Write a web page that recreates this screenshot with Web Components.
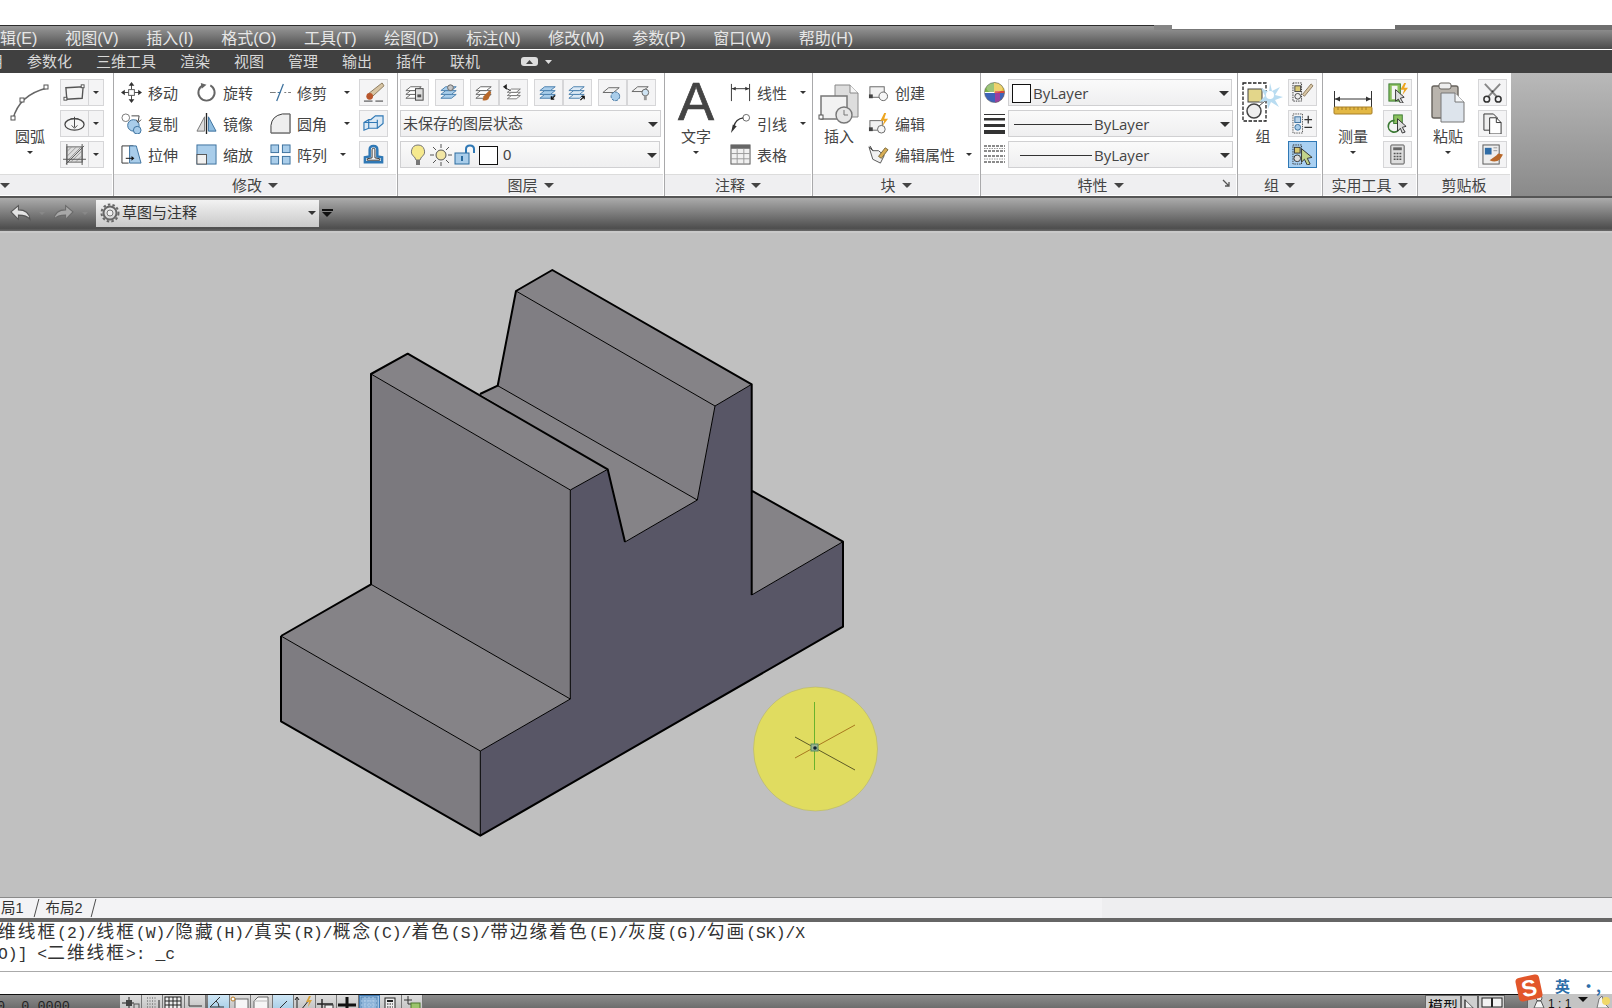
<!DOCTYPE html>
<html lang="zh">
<head>
<meta charset="utf-8">
<title>AutoCAD</title>
<style>
  html, body { margin: 0; height: 100%; overflow: hidden; background: #fff; }
  body { font: 15px "Liberation Sans", "Noto Sans CJK SC", sans-serif; color: #444; }
</style>
</head>
<body>
<cad-app>
  <cad-menubar>
    <span>辑(E)</span><span>视图(V)</span><span>插入(I)</span><span>格式(O)</span><span>工具(T)</span><span>绘图(D)</span><span>标注(N)</span><span>修改(M)</span><span>参数(P)</span><span>窗口(W)</span><span>帮助(H)</span>
  </cad-menubar>
  <cad-tabs>
    <span>参数化</span><span>三维工具</span><span>渲染</span><span>视图</span><span>管理</span><span>输出</span><span>插件</span><span>联机</span>
    <cad-icon name="tabtoggle" w="33" h="12" style="margin-left:16px"></cad-icon>
  </cad-tabs>

  <cad-ribbon>
    <cad-panel style="--w:114px;--pad:6px" left>
      <cad-big label="圆弧" caret><cad-icon name="arc" w="40" h="40"></cad-icon></cad-big>
      <cad-stack style="margin-left:6px">
        <cad-tool icon="rect" drop></cad-tool>
        <cad-tool icon="ellipse" drop></cad-tool>
        <cad-tool icon="hatch" drop></cad-tool>
      </cad-stack>
    </cad-panel>

    <cad-panel label="修改" style="--w:284px;--pad:7px">
      <cad-stack style="--col:75px">
        <cad-item icon="move" label="移动"></cad-item>
        <cad-item icon="copy" label="复制"></cad-item>
        <cad-item icon="stretch" label="拉伸"></cad-item>
      </cad-stack>
      <cad-stack style="--col:74px">
        <cad-item icon="rotate" label="旋转"></cad-item>
        <cad-item icon="mirror" label="镜像"></cad-item>
        <cad-item icon="scale" label="缩放"></cad-item>
      </cad-stack>
      <cad-stack style="--col:80px;margin-right:9px">
        <cad-item icon="trim" label="修剪" caret></cad-item>
        <cad-item icon="fillet" label="圆角" caret></cad-item>
        <cad-item icon="array" label="阵列" caret style="padding-right:4px"></cad-item>
      </cad-stack>
      <cad-stack>
        <cad-tool icon="erase"></cad-tool>
        <cad-tool icon="explode"></cad-tool>
        <cad-tool icon="offset"></cad-tool>
      </cad-stack>
    </cad-panel>

    <cad-panel label="图层" column style="--w:267px;--pad:2px">
      <cad-row>
        <cad-tool icon="lay1"></cad-tool>
        <cad-tool icon="lay2" style="margin-left:6px"></cad-tool>
        <cad-tool icon="lay3" style="margin-left:6px"></cad-tool><cad-tool icon="lay4"></cad-tool>
        <cad-tool icon="lay5" style="margin-left:6px"></cad-tool><cad-tool icon="lay6"></cad-tool>
        <cad-tool icon="lay7" style="margin-left:6px"></cad-tool><cad-tool icon="lay8"></cad-tool>
      </cad-row>
      <cad-combo style="--cw:261px"><span>未保存的图层状态</span></cad-combo>
      <cad-combo style="--cw:260px">
        <cad-icon name="bulb" w="20" h="22" style="margin-left:5px"></cad-icon>
        <cad-icon name="sun" w="22" h="22" style="margin-left:2px"></cad-icon>
        <cad-icon name="lock" w="22" h="22" style="margin-left:2px"></cad-icon>
        <cad-swatch style="margin-left:3px"></cad-swatch>
        <span style="margin-left:5px">0</span>
      </cad-combo>
    </cad-panel>

    <cad-panel label="注释" style="--w:148px;--pad:7px">
      <cad-big label="文字" caret><span style="font:400 54px/44px 'Liberation Sans',sans-serif;color:#444;-webkit-text-stroke:.7px #444;margin-bottom:3px">A</span></cad-big>
      <cad-stack style="--col:76px;margin-left:10px">
        <cad-item icon="dim" label="线性" caret></cad-item>
        <cad-item icon="leader" label="引线" caret></cad-item>
        <cad-item icon="table" label="表格"></cad-item>
      </cad-stack>
    </cad-panel>

    <cad-panel label="块" style="--w:168px;--pad:2px">
      <cad-big label="插入"><cad-icon name="insert" w="42" h="42"></cad-icon></cad-big>
      <cad-stack style="--col:104px;margin-left:5px">
        <cad-item icon="bcreate" label="创建"></cad-item>
        <cad-item icon="bedit" label="编辑"></cad-item>
        <cad-item icon="battr" label="编辑属性" caret></cad-item>
      </cad-stack>
    </cad-panel>

    <cad-panel label="特性" launcher column style="--w:257px;--pad:3px">
      <cad-row>
        <cad-icon name="wheel" w="21" h="21" style="margin-right:3px"></cad-icon>
        <cad-combo style="--cw:224px"><cad-swatch style="margin-left:1px"></cad-swatch><span style="margin-left:2px;font-family:'Open Sans',sans-serif">ByLayer</span></cad-combo>
      </cad-row>
      <cad-row>
        <cad-icon name="lweight" w="21" h="21" style="margin-right:3px"></cad-icon>
        <cad-combo style="--cw:225px"><i style="display:block;width:78px;height:1px;background:#333;margin-left:3px"></i><span style="margin-left:2px;font-family:'Open Sans',sans-serif">ByLayer</span></cad-combo>
      </cad-row>
      <cad-row>
        <cad-icon name="ltype" w="21" h="21" style="margin-right:3px"></cad-icon>
        <cad-combo style="--cw:225px"><i style="display:block;width:72px;height:1px;background:#333;margin-left:9px"></i><span style="margin-left:2px;font-family:'Open Sans',sans-serif">ByLayer</span></cad-combo>
      </cad-row>
    </cad-panel>

    <cad-panel label="组" style="--w:85px;--pad:1px">
      <cad-big label="组"><cad-icon name="group" w="42" h="42"></cad-icon></cad-big>
      <cad-stack style="margin-left:1px">
        <cad-tool icon="gedit"></cad-tool>
        <cad-tool icon="gplus"></cad-tool>
        <cad-tool icon="gsel" active></cad-tool>
      </cad-stack>
    </cad-panel>

    <cad-panel label="实用工具" style="--w:95px;--pad:6px">
      <cad-big label="测量" caret><cad-icon name="measure" w="40" h="26"></cad-icon></cad-big>
      <cad-stack style="margin-left:6px">
        <cad-tool icon="quick"></cad-tool>
        <cad-tool icon="idsel"></cad-tool>
        <cad-tool icon="calc"></cad-tool>
      </cad-stack>
    </cad-panel>

    <cad-panel label="剪贴板" nocaret style="--w:93px;--pad:6px;border-right:0">
      <cad-big label="粘贴" caret><cad-icon name="paste" w="36" h="42"></cad-icon></cad-big>
      <cad-stack style="margin-left:6px">
        <cad-tool icon="cut"></cad-tool>
        <cad-tool icon="copyclip"></cad-tool>
        <cad-tool icon="match"></cad-tool>
      </cad-stack>
    </cad-panel>
    <cad-ribbon-end></cad-ribbon-end>
  </cad-ribbon>

  <cad-qat label="草图与注释"></cad-qat>
  <cad-viewport></cad-viewport>
  <cad-layouts></cad-layouts>
  <cad-command>
    <cad-cmdline text="维线框(2)/线框(W)/隐藏(H)/真实(R)/概念(C)/着色(S)/带边缘着色(E)/灰度(G)/勾画(SK)/X"></cad-cmdline>
    <cad-cmdline text="O)] <二维线框>: _c"></cad-cmdline>
  </cad-command>
  <cad-status></cad-status>
  <cad-ime></cad-ime>
</cad-app>

<script>
const stack = (s = '#666', f = '#fff') => `<g fill="${f}" stroke="${s}"><path d="M3 16l5-4h11l-5 4z"/><path d="M3 12l5-4h11l-5 4z"/><path d="M3 8l5-4h11l-5 4z"/></g>`;
const sq = (x, y, s = 3) => `<rect x="${x}" y="${y}" width="${s}" height="${s}" fill="#fff" stroke="#555"/>`;

// every icon: [viewBox, svg markup]
const ICONS = {
  tabtoggle: ['0 0 33 12', '<rect x="1" y="1" width="17" height="9" rx="3" fill="#ddd"/><path d="M6 8l3.500-4 3.500 4z" fill="#444"/><path d="M25 4h7l-3.500 4z" fill="#ddd"/>'],
  arc: ['0 0 40 40', '<path d="M3 36Q9 12 37 5" fill="none" stroke="#666" stroke-width="1.500"/>' + sq(1, 33, 4) + sq(10, 15, 4) + sq(34, 2, 4)],
  rect: ['0 0 24 20', '<path d="M3 5l18-1-1 12-16 1z" fill="#f4f4f4" stroke="#555" stroke-width="1.400"/>' + sq(1, 15) + sq(19, 2)],
  ellipse: ['0 0 24 20', '<ellipse cx="12" cy="11" rx="10" ry="6" fill="#f5f5f5" stroke="#444" stroke-width="1.300"/><path d="M12 3v11M9 12l3 3 3-3M8 5h8" fill="none" stroke="#444"/>'],
  hatch: ['0 0 24 22', '<rect x="4" y="3" width="16" height="16" fill="#ddd" stroke="#666"/><path d="M4 8l5-5M4 13l10-10M4 18L19 3M8 19L20 7M13 19l7-7" stroke="#999"/><path d="M0 16h24M4 0v22M20 0v22M3 21L22 2" stroke="#555"/>'],
  move: ['0 0 22 22', '<path d="M11 2v18M2 11h18" stroke="#444"/><path d="M11 0l3 4H8zM11 22l3-4H8zM0 11l4-3v6zM22 11l-4-3v6z" fill="#333"/>' + sq(8, 8, 6)],
  copy: ['0 0 22 22', '<circle cx="5" cy="5" r="4" fill="#fff" stroke="#777"/><circle cx="13" cy="13" r="6" fill="#a9cdea" stroke="#3a6f9c"/><circle cx="17" cy="18" r="4" fill="#a9cdea" stroke="#3a6f9c"/><path d="M11 3h8l-1 6M16 7l2 3 3-3" fill="none" stroke="#444"/>'],
  stretch: ['0 0 22 22', '<path d="M1 2h12M1 2v18h7" fill="none" stroke="#333"/><path d="M9 2h7l5 18H9z" fill="#a9cdea" stroke="#3a6f9c"/><path d="M5 15h7" stroke="#111"/><path d="M14 15l-3-2.500v5z" fill="#111"/>'],
  rotate: ['0 0 22 22', '<path d="M15 3.500A8.500 8.500 0 1 1 7 3.500" fill="none" stroke="#666" stroke-width="2"/><path d="M5 1l6 2-5 4z" fill="#666"/>'],
  mirror: ['0 0 22 22', '<path d="M1 19L9 4v15z" fill="#ddd" stroke="#777"/><path d="M13 4l8 15h-8z" fill="#8fbde0" stroke="#3a6f9c"/><path d="M11 0v22" stroke="#222" stroke-width="1.400"/>'],
  scale: ['0 0 22 22', '<rect x="1" y="1" width="20" height="20" fill="#a9cdea" stroke="#3a6f9c"/><rect x="1" y="11" width="10" height="10" fill="#f1f1f1" stroke="#555"/>'],
  trim: ['0 0 22 22', '<path d="M0 11h6M15 11h2M19 11h3" stroke="#777"/><path d="M8 11h3" stroke="#3a6f9c"/><path d="M7 20L14 2" stroke="#3a6f9c" stroke-width="1.300"/>'],
  fillet: ['0 0 22 22', '<path d="M1 21V13Q2 3 13 1h8v20z" fill="#eee" stroke="#333"/><path d="M1 21h20M21 1v20" stroke="#888" fill="none"/>'],
  array: ['0 0 22 22', '<g fill="#a9cdea" stroke="#3a6f9c"><rect x="1" y="1" width="8" height="8"/><rect x="13" y="1" width="8" height="8"/><rect x="1" y="13" width="8" height="8"/><rect x="13" y="13" width="8" height="8"/></g>'],
  erase: ['0 0 24 22', '<path d="M7 12L21 1l2 3L10 16z" fill="#d8c5a4" stroke="#8b7a5c"/><circle cx="8" cy="15" r="3.500" fill="#b9562c"/><path d="M2 20h9M14 20h8" stroke="#333"/>'],
  explode: ['0 0 24 22', '<g fill="#dbe9f5" stroke="#2f78b5" stroke-width="1.200"><path d="M2 10l5-3h9v9H7l-5 2z"/><path d="M9 7l5-4h8v8l-6 5"/><path d="M7 7v9M16 7v9M2 10h14"/></g>'],
  offset: ['0 0 24 22', '<path d="M3 19v-5l5-1V6q0-4 4-4t4 4v7l5 1v5z" fill="none" stroke="#2f78b5" stroke-width="2.600"/><path d="M5.500 17v-1.500l5-1V6q0-1.500 1.500-1.500T13.500 6v8.500l5 1V17z" fill="none" stroke="#333"/>'],
  lay1: ['0 0 24 20', stack() + '<rect x="13" y="6" width="8" height="12" fill="#ddd" stroke="#444"/><rect x="15" y="12" width="4" height="3" fill="#555"/>'],
  lay2: ['0 0 24 20', stack('#4a80ad', '#a9cdea') + '<circle cx="13" cy="5" r="3" fill="#c4c4c4" stroke="#666"/>'],
  lay3: ['0 0 24 20', stack() + '<path d="M11 14l6-6 2 2-3 7q-3 2-6 1z" fill="#b8682a"/>'],
  lay4: ['0 0 24 20', '<g transform="translate(3 3) scale(.85)">' + stack() + '</g><path d="M3 5l6 3" stroke="#333"/><path d="M1 4l4-3v6z" fill="#222"/>'],
  lay5: ['0 0 24 20', stack('#4a80ad', '#a9cdea') + '<path d="M19 13l-4 4M15 14v3h3" fill="none" stroke="#111" stroke-width="1.300"/>'],
  lay6: ['0 0 24 20', stack('#4a80ad', '#dbe9f5') + '<path d="M15 18l4-4M16 14h3v3" fill="none" stroke="#111" stroke-width="1.300"/>'],
  lay7: ['0 0 24 20', '<path d="M2 10l6-5h11l-6 5z" fill="#f1f1f1" stroke="#666"/><circle cx="15" cy="14" r="4.500" fill="#a9cdea" stroke="#3a6f9c" stroke-dasharray="3 1"/>'],
  lay8: ['0 0 24 20', '<path d="M2 9l6-5h11l-6 5z" fill="#f1f1f1" stroke="#666"/><circle cx="16" cy="10" r="3.500" fill="#cfe4f4" stroke="#666"/><rect x="14.500" y="13" width="3" height="5" fill="#999"/>'],
  bulb: ['0 0 20 22', '<path d="M10 1a6.500 6.500 0 0 0-3.500 12L8 16h4l1.500-3A6.500 6.500 0 0 0 10 1z" fill="#f6e98d" stroke="#777"/><rect x="8" y="16" width="4" height="5" fill="#777"/>'],
  sun: ['0 0 22 22', '<circle cx="11" cy="11" r="5" fill="#f2e6a4" stroke="#555"/><path d="M11 0v4M11 18v4M0 11h4M18 11h4M3 3l3 3M16 16l3 3M3 19l3-3M16 6l3-3" stroke="#555"/>'],
  lock: ['0 0 22 22', '<path d="M12 9V5q0-3.500 4-3.500T20 5v4" fill="none" stroke="#2f78b5" stroke-width="2"/><rect x="1" y="9" width="14" height="11" fill="#a9cdea" stroke="#2c6c9f"/><rect x="7" y="12" width="2" height="5" fill="#2c6c9f"/>'],
  dim: ['0 0 22 22', '<path d="M1.500 2v18M20.500 2v18M2 7h18" stroke="#333" fill="none"/><path d="M2 7l4-2v4zM20 7l-4-2v4z" fill="#333"/>'],
  leader: ['0 0 22 22', '<circle cx="17" cy="5" r="3.500" fill="#fff" stroke="#666"/><path d="M14 5Q6 6 4 14" fill="none" stroke="#333" stroke-width="1.300"/><path d="M1 21l2-9 4 2z" fill="#333"/>'],
  table: ['0 0 22 22', '<rect x="1" y="1" width="20" height="20" fill="#f0f0f0" stroke="#555"/><rect x="1" y="1" width="20" height="4" fill="#666"/><path d="M1 10h20M1 15.500h20M7.500 5v16M14.500 5v16" stroke="#999"/>'],
  insert: ['0 0 42 42', '<path d="M17 3h15l8 8v24H17z" fill="#ddd" stroke="#888"/><path d="M32 3v8h8" fill="#f6f6f6" stroke="#888"/><rect x="3" y="14" width="26" height="23" fill="#f2f2f2" stroke="#777" stroke-width="1.500"/>' + sq(1, 33, 4) + '<circle cx="26" cy="33" r="8" fill="#e6e6e6" stroke="#777" stroke-width="1.400"/><path d="M26 33v-5M26 33h4" stroke="#777"/>'],
  bcreate: ['0 0 22 22', '<rect x="2" y="5" width="15" height="11" fill="#f2f2f2" stroke="#666"/><rect x="1" y="13" width="4" height="4" fill="#444"/><circle cx="16" cy="15" r="4.500" fill="#f6f6f6" stroke="#666"/>'],
  bedit: ['0 0 22 22', '<rect x="2" y="8" width="13" height="10" fill="#f2f2f2" stroke="#666"/><rect x="1" y="15" width="4" height="4" fill="#444"/><circle cx="14" cy="17" r="4" fill="#f6f6f6" stroke="#666"/><path d="M17 0l-4 8h4l-2 6 6-8h-4l2-6z" fill="#eda520"/>'],
  battr: ['0 0 22 22', '<path d="M1 3l4 4h6l6 5-4 8-8-4z" fill="#f1f1f1" stroke="#555"/><path d="M2 2l3 5" stroke="#333"/><path d="M11 13l7-9 3 2-7 9z" fill="#d8ad55" stroke="#7b6a3c"/>'],
  wheel: ['0 0 21 21', '<defs><clipPath id="c"><circle cx="10.500" cy="10.500" r="10"/></clipPath></defs><g clip-path="url(#c)"><path d="M0 0h21v10H0z" fill="#7bb24b"/><path d="M10 0h11v11H10z" fill="#e9c33c"/><path d="M11 9h10v12H11z" fill="#d8453a"/><path d="M0 11h21v10H0z" fill="#3d63b8"/><path d="M11 11h5v10h-5z" fill="#9a3fa0"/><ellipse cx="10.500" cy="6" rx="8" ry="5" fill="#fff" opacity=".25"/></g><circle cx="10.500" cy="10.500" r="10" fill="none" stroke="#666" stroke-width=".6"/>'],
  lweight: ['0 0 21 21', '<rect y="1" width="21" height="1" fill="#333"/><rect y="5" width="21" height="2.500" fill="#333"/><rect y="11" width="21" height="3" fill="#333"/><rect y="17" width="21" height="4.500" fill="#333"/>'],
  ltype: ['0 0 21 21', '<path d="M0 2h21M0 7h21M0 12h21M0 18h21" stroke="#666" stroke-width="1.300" stroke-dasharray="3 1"/><path d="M0 4.500h21M0 15h21" stroke="#999" stroke-dasharray="1.500 1"/>'],
  group: ['0 0 42 42', '<rect x="1" y="1" width="23" height="38" fill="none" stroke="#222" stroke-width="1.300" stroke-dasharray="3.500 1.500"/><rect x="6" y="7" width="14" height="13" fill="#e3d68a" stroke="#444"/><circle cx="12" cy="29" r="7" fill="#eee" stroke="#444" stroke-width="1.500"/><path d="M17 24l6-5" stroke="#444"/><path d="M28 1l2 8 8-4-5 8 8 2-8 3 4 7-8-5-3 7-1-8-8 1 6-6-4-8 8 4z" fill="#b9dcf1"/><circle cx="28" cy="13" r="4" fill="#fff"/>'],
  gedit: ['0 0 24 22', '<rect x="2" y="1" width="9" height="19" fill="none" stroke="#333" stroke-dasharray="1.500 1"/><rect x="4" y="4" width="6" height="6" fill="#d8c872" stroke="#444"/><circle cx="7" cy="15" r="3" fill="#eee" stroke="#444"/><path d="M12 13l9-11 2 2-9 11z" fill="#d8c5a4" stroke="#8b7a5c"/>'],
  gplus: ['0 0 24 22', '<rect x="2" y="1" width="10" height="20" fill="none" stroke="#555" stroke-dasharray="1.500 1"/><rect x="4" y="4" width="6" height="6" fill="#bcd5ea" stroke="#3a6f9c"/><circle cx="7" cy="15" r="3" fill="#a9cdea" stroke="#3a6f9c"/><path d="M14 7h8M18 3v8M14 15h8" stroke="#333" stroke-width="1.300"/>'],
  gsel: ['0 0 24 22', '<rect x="2" y="1" width="9" height="20" fill="none" stroke="#333" stroke-dasharray="1.500 1"/><rect x="3.500" y="3.500" width="6" height="6" fill="#d8c872" stroke="#333"/><circle cx="6.500" cy="15" r="3.500" fill="#ddd" stroke="#333"/><path d="M11 5l11 9-5 1 3 6-3 1-3-6-3 3z" fill="#c2d38b" stroke="#333"/>'],
  measure: ['0 0 40 26', '<path d="M1.500 1v16M38.500 1v16M2 9h36" stroke="#333" fill="none"/><path d="M2 9l5-2.500v5zM38 9l-5-2.500v5z" fill="#333"/><rect x="1" y="17" width="38" height="7" rx="1" fill="#e3b844" stroke="#a77f26"/><path d="M5 17v3M9 17v3M13 17v3M17 17v3M21 17v3M25 17v3M29 17v3M33 17v3" stroke="#a77f26"/>'],
  quick: ['0 0 24 22', '<rect x="3" y="2" width="12" height="18" fill="#8cc05f" stroke="#3b7a33"/><rect x="6" y="4" width="6" height="14" fill="#f5f5f5"/><path d="M19 1l-4 7h4l-2 6 6-8h-4l2-5z" fill="#eda520"/><path d="M10 8l9 8-4 1 3 5-3 0-2-4-3 2z" fill="#ddd" stroke="#333"/>'],
  idsel: ['0 0 24 22', '<rect x="8" y="2" width="9" height="9" fill="#8cc05f" stroke="#3b7a33"/><path d="M9 8a6 6 0 1 0 5 8" fill="none" stroke="#3b7a33" stroke-width="1.800"/><path d="M12 6l9 8-4 1 3 5-3 1-2-5-3 3z" fill="#ddd" stroke="#333"/>'],
  calc: ['0 0 24 22', '<rect x="5" y="1" width="14" height="20" rx="1" fill="#ddd" stroke="#555"/><rect x="7.500" y="3.500" width="9" height="3" fill="#666"/><path d="M8 10h8M8 13h8M8 16h8" stroke="#555" stroke-width="1.500" stroke-dasharray="2 1"/>'],
  paste: ['0 0 36 42', '<rect x="2" y="4" width="26" height="32" rx="2" fill="#b9b4ad" stroke="#66625c" stroke-width="1.400"/><rect x="9" y="1" width="12" height="6" rx="2" fill="#eee" stroke="#66625c"/><path d="M11 11h14l9 9v20H11z" fill="#dde4ec" stroke="#777"/><path d="M25 11v9h9" fill="#f5f7f9" stroke="#777"/>'],
  cut: ['0 0 24 22', '<path d="M4 2l13 14M20 2L7 16" stroke="#888" stroke-width="2"/><circle cx="6" cy="18" r="3" fill="none" stroke="#333" stroke-width="1.600"/><circle cx="18" cy="18" r="3" fill="none" stroke="#333" stroke-width="1.600"/><circle cx="12" cy="10" r="1" fill="#333"/>'],
  copyclip: ['0 0 24 22', '<path d="M3 1h10l4 4v13H3z" fill="#eee" stroke="#333"/><path d="M9 5h7l5 5v12H9z" fill="#fff" stroke="#333"/><path d="M16 5v5h5" fill="none" stroke="#333"/>'],
  match: ['0 0 24 22', '<rect x="2" y="1" width="17" height="20" fill="#eee" stroke="#555"/><rect x="4" y="4" width="7" height="7" fill="#2f6ca6"/><path d="M13 4h4M13 7h4" stroke="#999"/><path d="M9 17l7-5 2-2 5 1-3 5q-5 4-11 1z" fill="#b8682a"/>'],
  undo: ['0 0 20 16', '<path d="M1 7l7-6v4q10 0 11 9-3-4-11-4v4z" fill="#e4e4e4" stroke="#555"/>'],
  redo: ['0 0 20 16', '<path d="M19 7l-7-6v4Q2 5 1 14q3-4 11-4v4z" fill="#a8a8a8" stroke="#6a6a6a"/>'],
  gear: ['0 0 20 20', '<circle cx="10" cy="10" r="6.500" fill="none" stroke="#666" stroke-width="2"/><circle cx="10" cy="10" r="8.500" fill="none" stroke="#666" stroke-width="2" stroke-dasharray="2.500 2.200"/><circle cx="10" cy="10" r="3" fill="#eee" stroke="#777"/>'],
  slash: ['0 0 8 21', '<path d="M1 20L6 1" stroke="#444" fill="none"/>'],
  launch: ['0 0 9 9', '<path d="M1 1l6 6M7 3v4H3" fill="none" stroke="#555" stroke-width="1.300"/>'],
  snap: ['0 0 20 14', '<path d="M9 1v12M2 7h12" stroke="#222"/><rect x="6" y="4" width="6" height="6" fill="#444"/><rect x="14" y="8" width="5" height="5" fill="none" stroke="#555"/>'],
  dots: ['0 0 20 14', '<path d="M5 2h9M5 5h9M5 8h9M5 11h9" stroke="#555" stroke-dasharray="1 1.500"/><path d="M17 4v8" stroke="#222"/>'],
  grid: ['0 0 20 14', '<rect x="2" y="1" width="16" height="13" fill="#eee" stroke="#222"/><path d="M2 5h16M2 9h16M6 1v13M10 1v13M14 1v13" stroke="#222"/>'],
  ortho: ['0 0 20 14', '<path d="M4 0v10h13" fill="none" stroke="#333"/>'],
  polar: ['0 0 20 14', '<path d="M2 11L12 1M2 11h14" fill="none" stroke="#333"/><path d="M8 5q3 2 3 6" fill="none" stroke="#333"/>'],
  osnap: ['0 0 20 14', '<rect x="5" y="3" width="13" height="11" fill="#f6f6f6" stroke="#666"/><circle cx="3" cy="3" r="2" fill="#fff" stroke="#b5761d"/>'],
  box3d: ['0 0 20 14', '<path d="M3 5l4-4h10v13H3z" fill="#f6f6f6" stroke="#666"/><path d="M3 5h14" stroke="#bbb"/>'],
  track: ['0 0 20 14', '<path d="M5 14l9-9" stroke="#333"/><path d="M6 14h3" stroke="#888"/>'],
  ducs: ['0 0 20 14', '<path d="M3 14V2M1 4l2-3 2 3M7 14l8-10" fill="none" stroke="#222"/><path d="M15 0l-3 6h3l-1 5 4-7h-3l2-4z" fill="#d9a23a"/>'],
  dyn: ['0 0 20 14', '<path d="M6 3v11M1 8h16" stroke="#222" stroke-width="1.400"/><rect x="9" y="9" width="8" height="5" fill="#eee" stroke="#333"/>'],
  lw: ['0 0 20 14', '<path d="M10 1v11M1 9h18" stroke="#111" stroke-width="3"/>'],
  tp: ['0 0 20 14', '<rect x="2" y="1" width="16" height="13" fill="#8db3d8" stroke="#4f80ad"/><path d="M2 5h16M2 9h16M6 1v13M10 1v13M14 1v13" stroke="#b6d0ea" stroke-dasharray="1.500 1.500"/>'],
  qp: ['0 0 20 14', '<rect x="5" y="2" width="10" height="12" fill="#eee" stroke="#222"/><rect x="7" y="4" width="6" height="2" fill="#222"/><path d="M7 8h6M7 11h6" stroke="#222" stroke-dasharray="1.500 1"/>'],
  sc: ['0 0 20 14', '<path d="M6 0v8M2 4h8" stroke="#333"/><path d="M6 8h8" stroke="#333"/><rect x="9" y="7" width="9" height="7" fill="#9bc46a" stroke="#4e7a2e"/>'],
  rtile: ['0 0 20 14', '<path d="M4 2l11 11H4z" fill="#eee" stroke="#333"/><path d="M4 2v11" stroke="#111"/>'],
  rtile2: ['0 0 22 14', '<rect x="1" y="1" width="9.500" height="9" fill="#f2f2f2" stroke="#222"/><rect x="11.500" y="1" width="9.500" height="9" fill="#f2f2f2" stroke="#222"/>'],
  person: ['0 0 14 14', '<circle cx="7" cy="4" r="3" fill="#f4f4f4" stroke="#555"/><path d="M2 14l3-7h4l3 7z" fill="#f4f4f4" stroke="#555"/>'],
  star: ['0 0 16 14', '<path d="M2 14l2-9 3-3 2 7 5 5z" fill="#f4f4f4" stroke="#777"/><circle cx="11" cy="7" r="4" fill="#f0d86a"/>'],
};

// shared base, every element renders its shadow once
class CadElement extends HTMLElement {
  connectedCallback() {
    if (this.shadowRoot) return;
    this.attachShadow({mode: 'open'}).innerHTML = this.render();
  }
}

class CadIcon extends CadElement {
  render() {
    const [vb, body] = ICONS[this.getAttribute('name')];
    const w = this.getAttribute('w') || 22, h = this.getAttribute('h') || 20;
    return `<style>:host{display:inline-flex;flex:none}svg{display:block}</style>
      <svg xmlns="http://www.w3.org/2000/svg" width="${w}" height="${h}" viewBox="${vb}">${body}</svg>`;
  }
}

class CadCaret extends CadElement {
  render() {
    return `<style>:host{display:inline-block;flex:none;width:0;height:0;
      border-top:var(--s,4px) solid var(--c,#333);border-left:var(--s,4px) solid transparent;border-right:var(--s,4px) solid transparent}</style>`;
  }
}

class CadApp extends CadElement {
  render() {
    return `<style>:host{display:flex;flex-direction:column;position:relative;width:1612px;height:1008px;overflow:hidden;background:#fff}
      .top{height:25px;flex:none;background:#fff}</style><div class="top"></div><slot></slot>`;
  }
}

class CadMenubar extends CadElement {
  render() {
    return `<style>
      :host{display:flex;flex:none;position:relative;height:25px;box-sizing:border-box;gap:27.800px;align-items:center;
        border-top:1px solid #2c2c2c;border-bottom:1px solid #fff;padding-top:2px;
        background:linear-gradient(#999,#4b4b4b);font-size:16px;line-height:21px;color:#e6e6e6}
      ::slotted(span){white-space:nowrap}
      .edge{position:absolute;left:0;right:0;top:-1px;height:5px;display:flex}
      .edge i{display:block;height:100%}
      .a{margin-left:1154px;width:18px;background:#858585}
      .b{width:223px;height:4px!important;background:#fff;border-bottom:1px solid #777}
      .c{flex:1;background:#6f6f6f}
    </style><slot></slot><div class="edge"><i class="a"></i><i class="b"></i><i class="c"></i></div>`;
  }
}

class CadTabs extends CadElement {
  render() {
    return `<style>
      :host{display:flex;flex:none;height:23px;gap:24px;align-items:center;background:#404040;
        color:#d8d8d8;font-size:15px;line-height:23px;padding-left:27px;position:relative}
      ::slotted(span){white-space:nowrap}
      .cut{position:absolute;left:-12px;top:0;font-size:15px}
    </style><span class="cut">用</span><slot></slot>`;
  }
}

class CadRibbon extends CadElement {
  render() {
    return `<style>:host{display:flex;flex:none;height:123px;background:#fff}</style><slot></slot>`;
  }
}

class CadRibbonEnd extends CadElement {
  render() {
    return `<style>:host{display:block;flex:1;background:linear-gradient(#b9b9b9,#8a8a8a)}</style>`;
  }
}

class CadPanel extends CadElement {
  render() {
    const label = this.getAttribute('label') || '';
    const dir = this.hasAttribute('column') ? 'column' : 'row';
    const gap = this.hasAttribute('column') ? '4px' : '0';
    const left = this.hasAttribute('left');
    const lnch = this.hasAttribute('launcher');
    const caret = this.hasAttribute('nocaret') ? '' : `<cad-caret style="--s:5px;--c:#444${left ? ';margin-left:-6px' : ''}"></cad-caret>`;
    return `<style>
      :host{display:flex;flex-direction:column;flex:none;width:var(--w);box-sizing:border-box;border-right:1px solid #a9a9ab;position:relative;background:#fff}
      .body{display:flex;flex-direction:${dir};gap:${gap};height:101px;box-sizing:border-box;padding:6px 0 0 var(--pad,0)}
      .title{display:flex;align-items:center;justify-content:${left ? 'flex-start' : 'center'};gap:6px;height:21px;margin-right:1px;padding-top:1px;padding-right:${lnch ? '16px' : '0'};
        background:#efeff1;border-top:1px solid #dcdcdc;box-sizing:border-box;font-size:15px;line-height:18px;color:#444}
      .lnch{position:absolute;right:6px;top:106px}
    </style>
    <div class="body"><slot></slot></div>
    <div class="title"><span>${label}</span>${caret}</div>
    ${lnch ? '<cad-icon class="lnch" name="launch" w="9" h="9"></cad-icon>' : ''}`;
  }
}

class CadStack extends CadElement {
  render() {
    return `<style>:host{display:grid;grid-auto-rows:27px;row-gap:4px;flex:none;width:var(--col,auto)}</style><slot></slot>`;
  }
}

class CadRow extends CadElement {
  render() {
    return `<style>:host{display:flex;align-items:center;height:27px;flex:none}</style><slot></slot>`;
  }
}

class CadItem extends CadElement {
  render() {
    return `<style>
      :host{display:flex;align-items:center;height:27px;font-size:15px;line-height:20px;color:#444;white-space:nowrap}
      .l{margin-left:6px;padding-top:2px}
      cad-caret{margin-left:auto}
    </style><cad-icon name="${this.getAttribute('icon')}" w="21" h="21"></cad-icon><span class="l">${this.getAttribute('label')}</span>
    ${this.hasAttribute('caret') ? '<cad-caret style="--s:3.5px"></cad-caret>' : ''}`;
  }
}

class CadTool extends CadElement {
  render() {
    const on = this.hasAttribute('active');
    return `<style>
      :host{display:inline-flex;flex:none;height:27px;box-sizing:border-box}
      .b{width:29px;height:27px;box-sizing:border-box;display:flex;align-items:center;justify-content:center;
        background:${on ? '#a9d0f2' : '#f4f4f5'};border:1px solid ${on ? '#2f78b5' : '#d6d6d8'}}
      .d{width:15px;height:27px;box-sizing:border-box;display:flex;align-items:center;justify-content:center;
        background:#f4f4f5;border:1px solid #d6d6d8;border-left:0}
    </style><div class="b"><cad-icon name="${this.getAttribute('icon')}" w="23" h="21"></cad-icon></div>
    ${this.hasAttribute('drop') ? '<div class="d"><cad-caret style="--s:3.500px"></cad-caret></div>' : ''}`;
  }
}

class CadBig extends CadElement {
  render() {
    return `<style>
      :host{display:flex;flex-direction:column;align-items:center;flex:none;width:48px;font-size:15px;color:#444}
      .i{height:47px;display:flex;align-items:center;justify-content:center}
      .l{line-height:20px;height:20px;margin-top:1px}
      cad-caret{margin-top:4px}
    </style><div class="i"><slot></slot></div><div class="l">${this.getAttribute('label')}</div>
    ${this.hasAttribute('caret') ? '<cad-caret style="--s:3.500px"></cad-caret>' : ''}`;
  }
}

class CadCombo extends CadElement {
  render() {
    return `<style>
      :host{display:flex;align-items:center;flex:none;width:var(--cw);height:27px;box-sizing:border-box;
        background:linear-gradient(#fafafa,#efeff0);border:1px solid #d0d0d2;font-size:15px;line-height:20px;color:#444;padding:1px 0 0 2px;position:relative}
      ::slotted(span){white-space:nowrap}
      .m{margin-left:auto;margin-right:2px}
    </style><slot></slot><cad-caret class="m" style="--s:5px"></cad-caret>`;
  }
}

class CadSwatch extends CadElement {
  render() {
    return `<style>:host{display:block;flex:none;width:19px;height:19px;box-sizing:border-box;background:#fff;border:1px solid #111}</style>`;
  }
}

class CadQat extends CadElement {
  render() {
    return `<style>
      :host{display:flex;flex:none;height:37px;box-sizing:border-box;align-items:center;padding:0 0 3px 10px;
        border-top:2px solid #555;border-bottom:2px solid #c9c9c9;
        background:linear-gradient(#ababab,#4e4e4e 92%,#6a6a6a);}
      cad-caret{--c:#888}
      .combo{display:flex;align-items:center;width:223px;height:27px;margin-left:8px;box-sizing:border-box;
        background:linear-gradient(#f2f2f2,#c9c9c9);font-size:15px;color:#333;padding-left:4px}
      .combo span{margin-left:2px;white-space:nowrap;line-height:20px}
      .combo cad-caret{margin-left:auto;margin-right:3px;--c:#333}
      .end{margin-left:3px;display:flex;flex-direction:column;gap:1px}
      .end i{display:block;width:11px;height:2px;background:#111}
    </style>
    <cad-icon name="undo" w="21" h="18"></cad-icon><cad-caret style="--s:3px;margin-left:8px"></cad-caret>
    <cad-icon name="redo" w="21" h="18" style="margin-left:8px"></cad-icon><cad-caret style="--s:3px;margin-left:8px"></cad-caret>
    <div class="combo"><cad-icon name="gear" w="20" h="20"></cad-icon><span>${this.getAttribute('label')}</span><cad-caret style="--s:4.500px"></cad-caret></div>
    <div class="end"><i></i><cad-caret style="--s:5.500px;--c:#111"></cad-caret></div>`;
  }
}

class CadViewport extends CadElement {
  render() {
    // coordinates are page pixels, the svg starts at y 233
    const thick = 'fill="none" stroke="#000" stroke-width="2" stroke-linejoin="round"';
    const thin = 'fill="none" stroke="#000" stroke-width="1"';
    return `<style>:host{display:block;flex:1;min-height:0;background:#c0c0c0}svg{display:block}</style>
    <svg xmlns="http://www.w3.org/2000/svg" width="1612" height="664" viewBox="0 233 1612 664">
      <polygon points="281,636 480.300,751 480.300,835.700 281,721.300" fill="#7e7c81"/>
      <polygon points="281,636 371,584.300 570.300,699 480.300,751" fill="#858387"/>
      <polygon points="371,374 570.300,490 570.300,699 371,584.300" fill="#7b797e"/>
      <polygon points="371,374 407.700,353.700 607.700,469.300 570.300,490" fill="#858387"/>
      <polygon points="480,394 497.700,385.700 697.300,500 625,542 607.700,469.300" fill="#858387"/>
      <polygon points="497.700,385.700 516,291 715,406 697.300,500" fill="#807e83"/>
      <polygon points="516,291 552.300,270 751.700,384.300 715,406" fill="#858387"/>
      <polygon points="751.700,490.700 843,541.700 751.700,595" fill="#858387"/>
      <polygon points="480.300,751 570.300,699 570.300,490 607.700,469.300 625,542 697.300,500 715,406 751.700,384.300 751.700,595 843,541.700 843,626.700 480.300,835.700" fill="#585666"/>
      <path ${thin} d="M371 374L570.300 490M570.300 490V699M570.300 490L607.700 469.300M281 636L480.300 751M480.300 751V835.700M480.300 751L570.300 699M371 584.300L570.300 699M516 291L715 406M715 406L751.700 384.300M715 406L697.300 500M497.700 385.700L697.300 500M697.300 500L625 542M751.700 595L843 541.700"/>
      <path ${thick} d="M281 636L371 584.300V374L407.700 353.700L607.700 469.300L625 542M480 394L497.700 385.700L516 291L552.300 270L751.700 384.300V595M751.700 490.700L843 541.700V626.700L480.300 835.700L281 721.300V636"/>
      <circle cx="815.500" cy="749" r="62" fill="#e0dc60" stroke="#b5b36a" stroke-width=".6"/>
      <path d="M814.500 702V770" stroke="#69b32c" fill="none"/>
      <path d="M795 758L855 725" stroke="#a8781e" fill="none"/>
      <path d="M795 737L855 770" stroke="#5d5a26" fill="none"/>
      <rect x="811" y="744" width="7" height="7" fill="#9fb592" stroke="#558a62"/>
      <circle cx="815" cy="748" r="1.800" fill="#123"/>
    </svg>`;
  }
}

class CadLayouts extends CadElement {
  render() {
    return `<style>
      :host{display:flex;flex:none;align-items:center;height:21px;box-sizing:border-box;border-top:1px solid #8a8a8a;
        background:linear-gradient(90deg,#f3f3f5 0,#f3f3f5 1102px,#eeeef0 1102px);font-size:14.500px;line-height:20px;color:#333;padding-left:1px}
      .a{margin-left:9px}.b{margin-left:5px}.c{margin-left:7px}
    </style><span>局1</span><cad-icon class="a" name="slash" w="8" h="20"></cad-icon><span class="b">布局2</span><cad-icon class="c" name="slash" w="8" h="20"></cad-icon>`;
  }
}

class CadCommand extends CadElement {
  render() {
    return `<style>
      :host{display:block;flex:none;height:76px;box-sizing:border-box;border-top:4px solid #666;background:#fff;position:relative}
      .rule{position:absolute;left:0;right:0;top:49px;height:1px;background:#aaa}
    </style><slot></slot><div class="rule"></div>`;
  }
}

// splits the text in CJK and latin runs: half width mono beside full width CJK
class CadCmdline extends CadElement {
  render() {
    const runs = this.getAttribute('text').match(/[\u4e00-\u9fff]+|[^\u4e00-\u9fff]+/g);
    const esc = s => s.replace(/&/g, '&amp;').replace(/</g, '&lt;').replace(/>/g, '&gt;');
    const html = runs.map(r => /[\u4e00-\u9fff]/.test(r) ? `<span class="z">${r}</span>` : `<span class="a">${esc(r)}</span>`).join('');
    return `<style>
      :host{display:block;height:21px;line-height:17px;white-space:pre;color:#333;margin-left:-2px}
      .z{font:17.700px/17px "Noto Sans CJK SC",sans-serif;letter-spacing:2px}
      .a{font:16.400px/17px "Liberation Mono",monospace}
    </style>${html}`;
  }
}

class CadStatus extends CadElement {
  render() {
    const left = ['snap','dots','grid','ortho'], right = ['polar','osnap','box3d','track','ducs','dyn','lw','tp','qp','sc'];
    const cell = n => `<div class="cell ${n === 'tp' ? 'on' : ''} ${n === 'polar' || n === 'track' ? 'blue' : ''}"><cad-icon name="${n}" w="20" h="14"></cad-icon></div>`;
    return `<style>
      :host{display:flex;flex:none;height:13px;overflow:hidden;border-top:1px solid #111;
        background:linear-gradient(#8c8c8c,#6d6d6d);align-items:flex-start}
      .t{font:13.500px/20px "Liberation Mono",monospace;color:#222;width:120px;flex:none;white-space:pre;margin-top:2px;margin-left:-3px;margin-right:3px}
      .g{display:flex;height:14px;flex:none}
      .g+.g{margin-left:2px}
      .cell{width:21.500px;height:14px;box-sizing:border-box;background:linear-gradient(#dedede,#c4c4c4);border-right:1px solid #777;display:flex;justify-content:center;padding-top:1px}
      .blue{background:linear-gradient(#cfe6f5,#a8cfe8)}
      .on{background:#a3c6e8;outline:1px solid #3f78b0;outline-offset:-1px}
      .r{margin-left:auto;display:flex;height:14px;margin-right:107px;color:#111;font-size:15px}
      .r div{background:#cfcfcf;border:1px solid #666;border-bottom:0;height:14px;box-sizing:border-box;display:flex;justify-content:center;padding-top:1px}
      .m{width:36px;line-height:20px;overflow:hidden}
      .i{width:17px}
    </style>
    <div class="t">0  0.0000</div>
    <div class="g">${left.map(cell).join('')}</div>
    <div class="g">${right.map(cell).join('')}</div>
    <div class="r"><div class="m">模型</div><div class="i"><cad-icon name="rtile" w="15" h="13"></cad-icon></div><div class="i" style="width:27px"><cad-icon name="rtile2" w="22" h="14"></cad-icon></div></div>`;
  }
}

class CadIme extends CadElement {
  render() {
    return `<style>
      :host{position:absolute;left:1516px;top:975px;width:96px;height:33px;display:block}
      .bar{position:absolute;left:22px;top:2px;right:0;height:17px;background:#fff;display:flex;align-items:center;gap:11px;padding-left:17px;
        font:700 15px/17px "Noto Sans CJK SC",sans-serif;color:#2d6ea8}
      .logo{position:absolute;left:1px;top:1px;width:24px;height:24px;border-radius:4px;background:#e2562a;transform:rotate(-12deg);
        color:#fff;font:900 23px/24px "Liberation Sans",sans-serif;text-align:center}
      .scale{position:absolute;left:11px;top:19px;right:0;height:14px;display:flex;gap:2px;background:#c4c4c4;border-left:1px solid #666;padding-left:4px;font:12px/20px "Liberation Sans",sans-serif;color:#111;overflow:hidden}
      .scale cad-caret{margin:3px 0 0 5px;--s:5px;--c:#111}
    </style>
    <div class="scale"><cad-icon name="person" w="14" h="14"></cad-icon><span style="white-space:pre">1 : 1</span><cad-caret></cad-caret><cad-icon name="star" w="16" h="14" style="margin-left:5px"></cad-icon></div>
    <div class="bar"><span>英</span><span>•,</span><span style="font-weight:400">(</span></div>
    <div class="logo">S</div>`;
  }
}

window.customElements.define('cad-icon', CadIcon);
window.customElements.define('cad-caret', CadCaret);
window.customElements.define('cad-app', CadApp);
window.customElements.define('cad-menubar', CadMenubar);
window.customElements.define('cad-tabs', CadTabs);
window.customElements.define('cad-ribbon', CadRibbon);
window.customElements.define('cad-ribbon-end', CadRibbonEnd);
window.customElements.define('cad-panel', CadPanel);
window.customElements.define('cad-stack', CadStack);
window.customElements.define('cad-row', CadRow);
window.customElements.define('cad-item', CadItem);
window.customElements.define('cad-tool', CadTool);
window.customElements.define('cad-big', CadBig);
window.customElements.define('cad-combo', CadCombo);
window.customElements.define('cad-swatch', CadSwatch);
window.customElements.define('cad-qat', CadQat);
window.customElements.define('cad-viewport', CadViewport);
window.customElements.define('cad-layouts', CadLayouts);
window.customElements.define('cad-command', CadCommand);
window.customElements.define('cad-cmdline', CadCmdline);
window.customElements.define('cad-status', CadStatus);
window.customElements.define('cad-ime', CadIme);
</script>
</body>
</html>
